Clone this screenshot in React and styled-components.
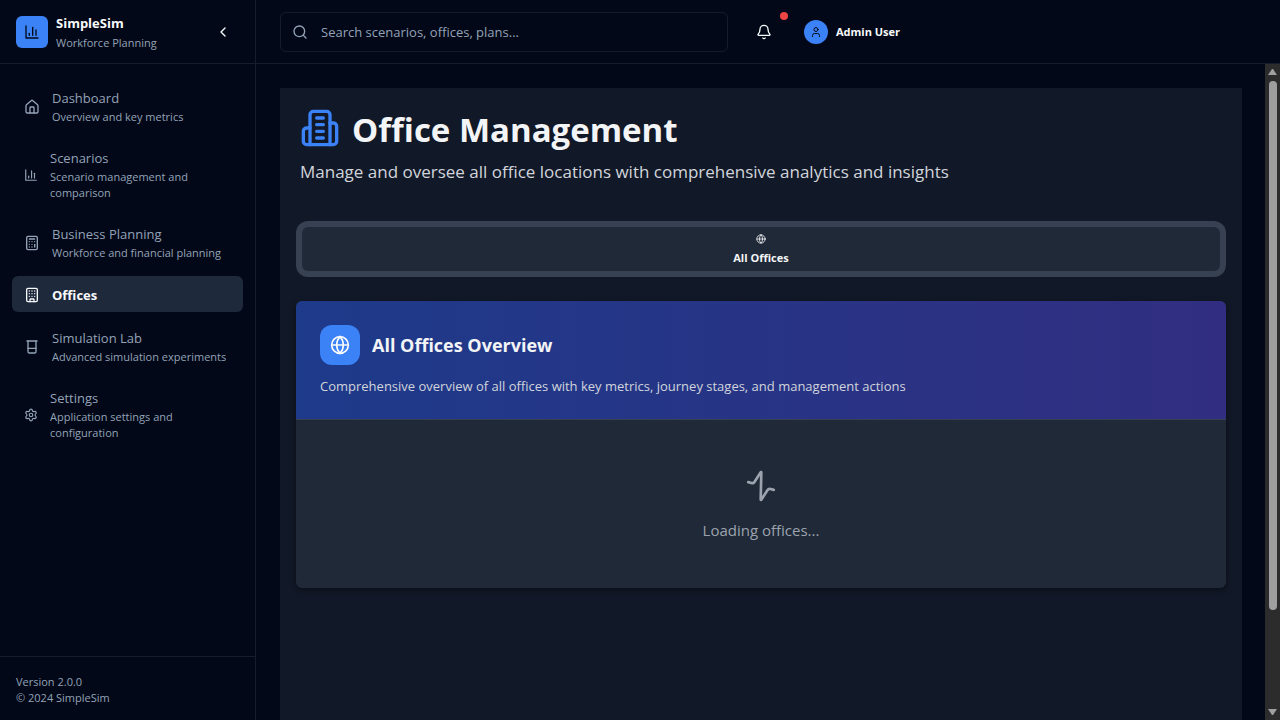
import React from "react";
import styled, { createGlobalStyle } from "styled-components";
import {
  House,
  Calculator,
  Building,
  Beaker,
  Settings,
  Search,
  Bell,
  User,
  Globe,
  ChevronLeft,
  Activity,
} from "lucide-react";

const color = {
  page: "#020817",
  line: "#151d2c",
  primary: "#3b82f6",
  text: "#f8fafc",
  muted: "#94a3b8",
  active: "#1e293b",
  panel: "#111827",
  card: "#1f2937",
  cardLine: "#374151",
};

const GlobalStyle = createGlobalStyle`
  *, *::before, *::after { box-sizing: border-box; }
  body {
    margin: 0;
    background: ${color.page};
    color: ${color.text};
    font-family: "Open Sans", "Noto Sans", sans-serif;
    font-size: 13px;
    line-height: 20px;
  }
  h1, h2, p, ul { margin: 0; padding: 0; }
  button, input { font: inherit; color: inherit; }
  svg { display: block; }
`;

const Shell = styled.div`
  display: flex;
  height: 100vh;
  overflow: hidden;
`;

const Sidebar = styled.aside`
  display: flex;
  flex-direction: column;
  flex: 0 0 256px;
  border-right: 1px solid ${color.line};
`;

const Brand = styled.div`
  display: flex;
  align-items: center;
  gap: 8px;
  height: 64px;
  padding: 0 16px;
  border-bottom: 1px solid ${color.line};
`;

const BrandMark = styled.div`
  display: grid;
  place-items: center;
  width: 32px;
  height: 32px;
  border-radius: 6px;
  background: ${color.primary};
  color: ${color.page};
`;

const BrandText = styled.div`
  flex: 1;
  padding-top: 2px;
`;

const BrandName = styled.p`
  font-weight: 700;
`;

const BrandTagline = styled.p`
  font-size: 11px;
  color: ${color.muted};
`;

const IconButton = styled.button`
  display: grid;
  place-items: center;
  width: 32px;
  height: 32px;
  padding: 0;
  border: 0;
  border-radius: 6px;
  background: transparent;
  cursor: pointer;
`;

const Nav = styled.nav`
  flex: 1;
  padding: 12px;
`;

const NavList = styled.ul`
  display: flex;
  flex-direction: column;
  gap: 4px;
  list-style: none;
`;

const NavLink = styled.a`
  display: flex;
  align-items: center;
  gap: 12px;
  min-height: ${(p) => (p.$active ? 36 : 60)}px;
  padding: 8px 12px 7px;
  border-radius: 6px;
  text-decoration: none;
  font-weight: ${(p) => (p.$active ? 700 : 400)};
  color: ${(p) => (p.$active ? color.text : color.muted)};
  background: ${(p) => (p.$active ? color.active : "transparent")};
  svg { flex: none; }
`;

const NavHint = styled.span`
  display: block;
  padding-top: 1px;
  font-size: 11px;
  line-height: 16px;
`;

const SidebarFooter = styled.footer`
  padding: 17px 16px 14px;
  border-top: 1px solid ${color.line};
  font-size: 11px;
  line-height: 16px;
  color: ${color.muted};
`;

const Column = styled.div`
  display: flex;
  flex-direction: column;
  flex: 1;
  min-width: 0;
`;

const TopBar = styled.header`
  display: flex;
  align-items: center;
  flex: 0 0 64px;
  padding: 0 24px;
  border-bottom: 1px solid ${color.line};
`;

const SearchBox = styled.label`
  display: flex;
  align-items: center;
  gap: 13px;
  flex: 0 1 448px;
  height: 40px;
  padding: 0 11px;
  border: 1px solid ${color.line};
  border-radius: 6px;
  color: ${color.muted};
`;

const SearchInput = styled.input`
  flex: 1;
  min-width: 0;
  padding: 0;
  border: 0;
  outline: 0;
  background: transparent;
  &::placeholder { color: ${color.muted}; opacity: 1; }
`;

const BellButton = styled(IconButton)`
  position: relative;
  margin: 0 24px 0 20px;
`;

const Dot = styled.span`
  position: absolute;
  top: -4px;
  right: -8px;
  width: 8px;
  height: 8px;
  border-radius: 50%;
  background: #ef4444;
`;

const UserButton = styled.button`
  display: flex;
  align-items: center;
  gap: 8px;
  padding: 0;
  border: 0;
  background: transparent;
  font-size: 11px;
  font-weight: 700;
  cursor: pointer;
`;

const Avatar = styled.span`
  display: grid;
  place-items: center;
  width: 24px;
  height: 24px;
  border-radius: 50%;
  background: ${color.primary};
  color: ${color.page};
`;

const Viewport = styled.div`
  display: flex;
  flex: 1;
  min-height: 0;
`;

const Main = styled.main`
  flex: 1;
  min-width: 0;
  padding: 24px 23px 0 24px;
  overflow: hidden;
`;

const Panel = styled.div`
  min-height: 100%;
  padding: 16px;
  background: ${color.panel};
`;

const PageHead = styled.div`
  padding: 4px 4px 35px;
`;

const TitleRow = styled.div`
  display: flex;
  align-items: flex-start;
  gap: 12px;
  color: ${color.primary};
`;

const Title = styled.h1`
  font-size: 33px;
  line-height: 44px;
  font-weight: 700;
  color: #f3f4f6;
`;

const Subtitle = styled.p`
  padding-top: 6px;
  font-size: 17px;
  line-height: 28px;
  color: #d1d5db;
`;

const Tabs = styled.div`
  display: flex;
  padding: 6px;
  border-radius: 12px;
  background: ${color.cardLine};
`;

const Tab = styled.button`
  display: flex;
  flex: 1;
  flex-direction: column;
  align-items: center;
  gap: 5px;
  padding: 7px 12px 4px;
  border: 0;
  border-radius: 6px;
  background: ${color.card};
  color: #f3f4f6;
  font-size: 11px;
  line-height: 18px;
  font-weight: 700;
`;

const Card = styled.section`
  margin-top: 24px;
  border-radius: 6px;
  overflow: hidden;
  background: ${color.card};
  box-shadow: 0 2px 6px rgba(0, 0, 0, 0.4);
`;

const CardHead = styled.div`
  padding: 24px 24px 23px;
  border-bottom: 1px solid ${color.cardLine};
  background: linear-gradient(90deg, #1e3a8a, #312e81);
`;

const CardTitleRow = styled.div`
  display: flex;
  align-items: center;
  gap: 12px;
`;

const CardMark = styled.div`
  display: grid;
  place-items: center;
  width: 40px;
  height: 40px;
  border-radius: 12px;
  background: ${color.primary};
`;

const CardTitle = styled.h2`
  font-size: 18px;
  line-height: 28px;
  font-weight: 700;
  color: #f3f4f6;
`;

const CardText = styled.p`
  padding-top: 11px;
  color: #d1d5db;
`;

const Loading = styled.div`
  display: flex;
  flex-direction: column;
  align-items: center;
  gap: 16px;
  padding: 50px 48px 46px;
  font-size: 15px;
  line-height: 24px;
  color: #9ca3af;
  svg { transform: rotate(17deg); }
`;

const ScrollTrack = styled.div`
  display: flex;
  flex-direction: column;
  align-items: center;
  flex: 0 0 15px;
  padding: 4px 0;
  background: #2c2c2c;
`;

const ScrollSpace = styled.div`
  flex: 1;
  width: 8px;
  padding: 5px 0;
`;

const ScrollThumb = styled.div`
  height: 85%;
  border-radius: 4px;
  background: #9f9f9f;
`;

const BarsIcon = ({ size }) => (
  <svg width={size} height={size} viewBox="0 0 24 24" fill="none" stroke="currentColor" strokeWidth="2" strokeLinecap="round" strokeLinejoin="round" aria-hidden="true">
    <path d="M3 3v18h18" />
    <path d="M18 17V9" />
    <path d="M13 17V5" />
    <path d="M8 17v-3" />
  </svg>
);

const OfficeIcon = ({ size }) => (
  <svg width={size} height={size} viewBox="0 0 24 24" fill="none" stroke="currentColor" strokeWidth="2" strokeLinecap="round" strokeLinejoin="round" aria-hidden="true">
    <path d="M6 22V4a2 2 0 0 1 2-2h8a2 2 0 0 1 2 2v18Z" />
    <path d="M6 12H4a2 2 0 0 0-2 2v6a2 2 0 0 0 2 2h2" />
    <path d="M18 9h2a2 2 0 0 1 2 2v9a2 2 0 0 1-2 2h-2" />
    <path d="M10 6h4M10 10h4M10 14h4M10 18h4" />
  </svg>
);

const Arrow = ({ down }) => (
  <svg width="9" height="8" viewBox="0 0 9 8" fill="#9f9f9f" aria-hidden="true">
    <path d={down ? "M0 1h9L5 7H4Z" : "M0 7h9L5 1H4Z"} />
  </svg>
);

const items = [
  { label: "Dashboard", hint: "Overview and key metrics", Icon: House, size: 16 },
  { label: "Scenarios", hint: "Scenario management and comparison", Icon: BarsIcon, size: 14 },
  { label: "Business Planning", hint: "Workforce and financial planning", Icon: Calculator, size: 16 },
  { label: "Offices", Icon: Building, size: 16, active: true },
  { label: "Simulation Lab", hint: "Advanced simulation experiments", Icon: Beaker, size: 16 },
  { label: "Settings", hint: "Application settings and configuration", Icon: Settings, size: 14 },
];

export default function App() {
  return (
    <>
      <GlobalStyle />
      <Shell>
        <Sidebar>
          <Brand>
            <BrandMark><BarsIcon size={16} /></BrandMark>
            <BrandText>
              <BrandName>SimpleSim</BrandName>
              <BrandTagline>Workforce Planning</BrandTagline>
            </BrandText>
            <IconButton type="button" aria-label="Collapse sidebar"><ChevronLeft size={16} /></IconButton>
          </Brand>
          <Nav aria-label="Main">
            <NavList>
              {items.map(({ label, hint, Icon, size, active }) => (
                <li key={label}>
                  <NavLink href="#" $active={active} aria-current={active ? "page" : undefined}>
                    <Icon size={size} />
                    <span>
                      {label}
                      {hint && <NavHint>{hint}</NavHint>}
                    </span>
                  </NavLink>
                </li>
              ))}
            </NavList>
          </Nav>
          <SidebarFooter>
            <p>Version 2.0.0</p>
            <p>© 2024 SimpleSim</p>
          </SidebarFooter>
        </Sidebar>
        <Column>
          <TopBar>
            <SearchBox>
              <Search size={16} />
              <SearchInput type="text" aria-label="Search" placeholder="Search scenarios, offices, plans..." />
            </SearchBox>
            <BellButton type="button" aria-label="Notifications">
              <Bell size={16} />
              <Dot />
            </BellButton>
            <UserButton type="button">
              <Avatar><User size={12} /></Avatar>
              Admin User
            </UserButton>
          </TopBar>
          <Viewport>
            <Main>
              <Panel>
                <PageHead>
                  <TitleRow>
                    <OfficeIcon size={40} />
                    <Title>Office Management</Title>
                  </TitleRow>
                  <Subtitle>Manage and oversee all office locations with comprehensive analytics and insights</Subtitle>
                </PageHead>
                <Tabs role="tablist">
                  <Tab type="button" role="tab" aria-selected="true">
                    <Globe size={10} />
                    All Offices
                  </Tab>
                </Tabs>
                <Card>
                  <CardHead>
                    <CardTitleRow>
                      <CardMark><Globe size={20} /></CardMark>
                      <CardTitle>All Offices Overview</CardTitle>
                    </CardTitleRow>
                    <CardText>Comprehensive overview of all offices with key metrics, journey stages, and management actions</CardText>
                  </CardHead>
                  <Loading role="status">
                    <Activity size={32} />
                    <p>Loading offices...</p>
                  </Loading>
                </Card>
              </Panel>
            </Main>
            <ScrollTrack aria-hidden="true">
              <Arrow />
              <ScrollSpace><ScrollThumb /></ScrollSpace>
              <Arrow down />
            </ScrollTrack>
          </Viewport>
        </Column>
      </Shell>
    </>
  );
}
